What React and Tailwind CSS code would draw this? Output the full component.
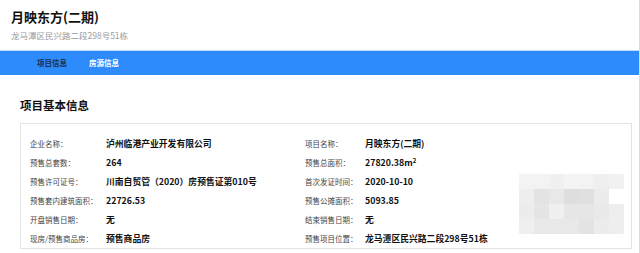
const left = [
  ['企业名称：', '泸州临港产业开发有限公司'],
  ['预售总套数：', '264'],
  ['预售许可证号：', '川南自贸管（2020）房预售证第010号'],
  ['预售套内建筑面积：', '22726.53'],
  ['开盘销售日期：', '无'],
  ['现房/预售商品房：', '预售商品房'],
]

const right = [
  ['项目名称：', '月映东方(二期)'],
  ['预售总面积：', <>27820.38m<sup className="text-[6px]">2</sup></>],
  ['首次发证时间：', '2020-10-10'],
  ['预售公摊面积：', '5093.85'],
  ['结束销售日期：', '无'],
  ['预售项目位置：', '龙马潭区民兴路二段298号51栋'],
]

// blurred picture (pixelated) on the right side of the card
const blur = [
  ['#f3f3f3', '#f3f3f3', '#f0f0f0', '#f4f4f4', '#f3f3f3', '#efefef', '#f1f1f1'],
  ['#eeeeee', '#e3e3e3', '#e8e8e8', '#dedede', '#e0e0e0', '#ececec', '#ffffff'],
  ['#ececec', '#e5e5e5', '#f0f0f0', '#e6e6e6', '#e6e6e6', '#e9e9e9', '#eeeeee'],
  ['#efefef', '#e9e9e9', '#e8e8e8', '#e8e8e8', '#e3e3e3', '#ececec', '#eeeeee'],
]

export default function App() {
  return (
    <div className="w-[640px] h-[253px] overflow-hidden bg-white border-r border-[#dcdcdc] font-['Noto_Sans_CJK_SC','Noto_Sans',sans-serif]">
      <div className="px-[11px] pt-[7px]">
        <div className="text-[13px] leading-[20px] font-bold text-[#111]">月映东方(二期)</div>
        <div className="mt-[2px] text-[8.5px] leading-[12px] text-[#9a9a9a]">龙马潭区民兴路二段298号51栋</div>
      </div>

      <div className="mt-[9px] h-[25px] bg-[#2e8bfc] border-t border-[#bcd9ff] flex items-center pl-[37px] gap-[22px] text-[7.5px] font-bold">
        <span className="text-[#1c2e4a]">项目信息</span>
        <span className="text-white">房源信息</span>
      </div>

      <div className="px-[20px] pr-[7px]">
        <div className="pt-[20px] h-[48px] text-[11.5px] leading-[20px] font-bold text-[#111]">项目基本信息</div>

        <div className="border border-[#e3e3e3] pl-[9px] pt-[10px] flex">
          <div className="w-[488px]">
            {left.map(([l, v], i) => (
              <div key={l} className="flex h-[19px] items-center">
                <div className="w-[76px] text-[7.5px] text-[#444]">{l}</div>
                <div className="w-[199px] text-[8.8px] font-bold text-[#111] whitespace-nowrap">{v}</div>
                <div className="w-[60px] text-[7.5px] text-[#444]">{right[i][0]}</div>
                <div className="text-[8.8px] font-bold text-[#111] whitespace-nowrap">{right[i][1]}</div>
              </div>
            ))}
          </div>
          <div className="mt-[40px] ml-[1px] grid grid-cols-7 w-[105px] h-[60px]">
            {blur.flat().map((c, i) => (
              <div key={i} style={{ background: c }} />
            ))}
          </div>
        </div>
      </div>
    </div>
  )
}
